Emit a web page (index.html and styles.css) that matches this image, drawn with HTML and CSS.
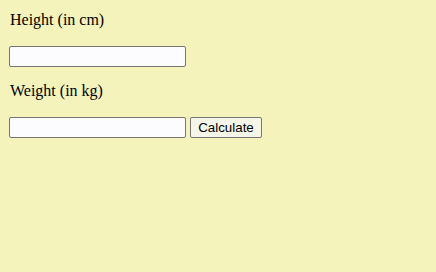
FILE: index.html
```html
<!DOCTYPE html>
<html lang="en">
<head>
  <meta charset="UTF-8">
  <meta name="viewport" content="width=device-width, initial-scale=1.0">
  <title>BMI Calculator</title>
  <link rel="stylesheet" href="styles.css">
</head>
<body>
  <form class="bmi-form">
    <label for="height" class="field-label">Height (in cm)</label>
    <div class="field-row">
      <input type="text" id="height" class="field-input">
    </div>
    <label for="weight" class="field-label">Weight (in kg)</label>
    <div class="field-row">
      <input type="text" id="weight" class="field-input">
      <button type="button" class="calc-button">Calculate</button>
    </div>
  </form>
</body>
</html>
```

FILE: styles.css
```css
body {
  margin: 0;
  font-family: 'Liberation Serif', 'Times New Roman', serif;
  font-size: 16px;
  color: #000;
  background-color: #f3f3bb;
}

.bmi-form {
  margin: 0;
  padding: 11px 9px;
}

.field-label {
  display: block;
  line-height: 18px;
  padding-left: 1px;
  margin-bottom: 17px;
}

.field-row {
  display: flex;
  align-items: center;
  gap: 4px;
  margin-bottom: 15px;
}

.field-input {
  font-family: 'Liberation Sans', Arial, sans-serif;
  font-size: 13.33px;
  width: 177px;
  height: 21px;
  box-sizing: border-box;
  margin: 0;
  padding: 1px 2px;
  border: 1px solid #767676;
  border-radius: 2px;
  background-color: #fcfcfe;
}

.calc-button {
  font-family: 'Liberation Sans', Arial, sans-serif;
  font-size: 13.33px;
  width: 72px;
  height: 21px;
  box-sizing: border-box;
  margin: 0;
  padding: 1px 6px;
  border: 1px solid #767676;
  border-radius: 2px;
  background-color: #f6f6e8;
  color: #000;
}
```
